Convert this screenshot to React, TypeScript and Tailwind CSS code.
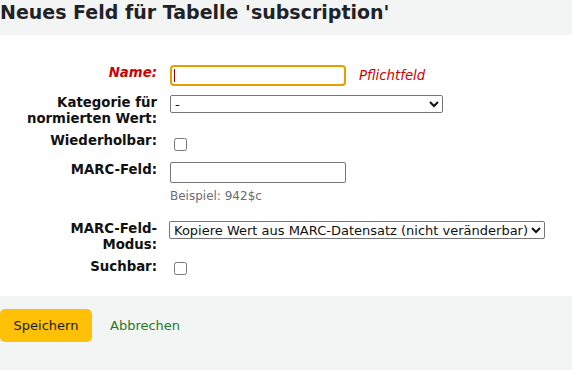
import React from "react"

const labelCls = "w-[157px] shrink-0 text-right text-[13.3px] leading-4 font-bold text-[#111]"

export default function App() {
  return (
    <div className="w-[572px] h-[370px] overflow-hidden flex flex-col bg-white text-[#111]" style={{ fontFamily: '"DejaVu Sans", sans-serif' }}>
      <div className="h-[35px] shrink-0 bg-[#f3f4f4]">
        <h1 className="text-[19px] leading-6 font-bold text-[#1f2328]">Neues Feld für Tabelle 'subscription'</h1>
      </div>

      <form className="h-[261px] shrink-0 bg-white pt-[30px]">
        {/* Name */}
        <div className="flex items-start">
          <label className={labelCls + " italic text-[#cc0000]"}>Name:</label>
          <div className="ml-[13px] flex items-center">
            <div className="relative">
              <input type="text" className="block h-[21px] w-[176px] rounded-[4px] border-2 border-[#e69e00] bg-white px-1 text-[13px] outline-none" />
              <span className="absolute left-[4px] top-[4px] h-[13px] w-px bg-[#990000]" />
            </div>
            <span className="ml-[13px] text-[13.3px] italic text-[#cc0000]">Pflichtfeld</span>
          </div>
        </div>

        {/* Kategorie */}
        <div className="mt-[9px] flex items-start">
          <label className={labelCls}>
            Kategorie für
            <br />
            normierten Wert:
          </label>
          <select className="ml-[13px] h-[18px] w-[273px] rounded-[2px] border border-[#767676] bg-white text-[13px] leading-4">
            <option>-</option>
          </select>
        </div>

        {/* Wiederholbar */}
        <div className="mt-[6px] flex items-start">
          <label className={labelCls}>Wiederholbar:</label>
          <input type="checkbox" className="m-0 ml-[17px] mt-[5px] h-[13px] w-[13px]" />
        </div>

        {/* MARC-Feld */}
        <div className="mt-[11px] flex items-start">
          <label className={labelCls}>MARC-Feld:</label>
          <div className="ml-[13px]">
            <input type="text" className="block h-[21px] w-[176px] rounded-[2px] border border-[#767676] bg-white px-1 text-[13px]" />
            <div className="mt-[5px] text-[12px] leading-4 text-[#6c6c6c]">Beispiel: 942$c</div>
          </div>
        </div>

        {/* MARC-Feld-Modus */}
        <div className="mt-[17px] flex items-start">
          <label className={labelCls}>
            MARC-Feld-
            <br />
            Modus:
          </label>
          <select className="ml-[12px] h-[18px] w-[376px] rounded-[2px] border border-[#767676] bg-white text-[13px] leading-4">
            <option>Kopiere Wert aus MARC-Datensatz (nicht veränderbar)</option>
          </select>
        </div>

        {/* Suchbar */}
        <div className="mt-[6px] flex items-start">
          <label className={labelCls}>Suchbar:</label>
          <input type="checkbox" className="m-0 ml-[17px] mt-[3px] h-[13px] w-[13px]" />
        </div>
      </form>

      <div className="flex-1 bg-[#f3f4f4] pt-[13px]">
        <div className="flex items-center">
          <button type="button" className="h-[33px] w-[92px] rounded-[5px] bg-[#ffc107] text-[13px] text-[#1a1a1a]">
            Speichern
          </button>
          <a className="ml-[18px] text-[13px] text-[#1f7a1f]">Abbrechen</a>
        </div>
      </div>
    </div>
  )
}
